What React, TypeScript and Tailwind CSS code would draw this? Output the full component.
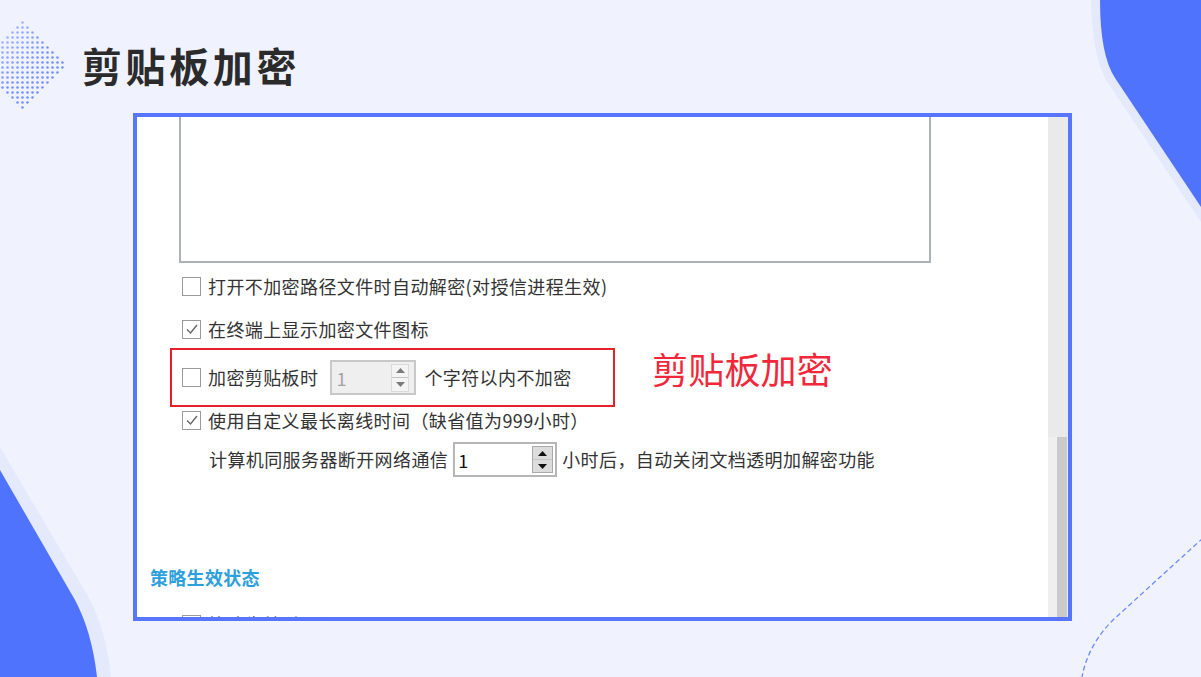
import React from 'react';

const cjk = "font-['Noto_Sans_CJK_SC','Noto_Sans',sans-serif]";

// Page decorations: corner blobs, dashed curve and the dotted diamond
function Backdrop() {
  return (
    <svg className="absolute inset-0 pointer-events-none" width="1201" height="677" viewBox="0 0 1201 677">
      <defs>
        <pattern id="dots" width="5" height="5" patternUnits="userSpaceOnUse">
          <circle cx="2.5" cy="2.5" r="1.3" fill="#6a86ff" />
        </pattern>
        <linearGradient id="fade" x1="0" y1="0" x2="1" y2="1">
          <stop offset="0" stopColor="#fff" stopOpacity="0.35" />
          <stop offset="0.55" stopColor="#fff" stopOpacity="0.9" />
          <stop offset="1" stopColor="#fff" stopOpacity="1" />
        </linearGradient>
        <mask id="diamondMask">
          <polygon points="22,20 67,65 22,110 -23,65" fill="url(#fade)" />
        </mask>
      </defs>

      <rect x="-30" y="15" width="100" height="100" fill="url(#dots)" mask="url(#diamondMask)" />

      <path d="M1091 0 Q1092 55 1106 80 L1201 222 L1201 0 Z" fill="#e5e9fc" />
      <path d="M1100 0 Q1100 55 1115 78 L1201 207 L1201 0 Z" fill="#5073fe" />

      <path d="M0 447 L89 598 Q106 630 111 677 L0 677 Z" fill="#e5e9fc" />
      <path d="M0 470 L75 600 Q92 632 97 677 L0 677 Z" fill="#5073fe" />

      <path
        d="M1203 538 L1113 620 Q1088 645 1082 677"
        fill="none"
        stroke="#6d88ff"
        strokeWidth="1.3"
        strokeDasharray="5 3"
      />
    </svg>
  );
}

function Checkbox({ checked = false }: { checked?: boolean }) {
  return (
    <div className="w-[19px] h-[19px] shrink-0 border-[1.5px] border-[#9a9a9a] bg-white flex items-center justify-center">
      {checked && (
        <svg width="14" height="14" viewBox="0 0 14 14">
          <path d="M2 7.5 L5.5 11 L12 3" fill="none" stroke="#666" strokeWidth="1.4" />
        </svg>
      )}
    </div>
  );
}

function Arrows({ disabled = false }: { disabled?: boolean }) {
  const c = disabled ? '#7b7b7b' : '#111';
  return (
    <div
      className={
        disabled
          ? 'w-[18px] h-[28px] flex flex-col border border-[#dadada] bg-[#f4f4f4]'
          : 'w-[21px] h-[27px] flex flex-col border border-[#a9a9a9] bg-[#dcdcdc]'
      }
    >
      <div className="flex-1 flex items-center justify-center border-b border-[#c4c4c4]">
        <svg width="9" height="5" viewBox="0 0 9 5">
          <polygon points="0,5 9,5 4.5,0" fill={c} />
        </svg>
      </div>
      <div className="flex-1 flex items-center justify-center">
        <svg width="9" height="5" viewBox="0 0 9 5">
          <polygon points="0,0 9,0 4.5,5" fill={c} />
        </svg>
      </div>
    </div>
  );
}

function Row({ checked, label, className = '' }: { checked?: boolean; label: string; className?: string }) {
  return (
    <div className={`h-[20px] pl-[45px] flex items-center ${className}`}>
      <Checkbox checked={checked} />
      <span className="ml-[7px] text-[18px] tracking-[0.4px] leading-[20px] text-[#333] whitespace-nowrap">{label}</span>
    </div>
  );
}

export default function App() {
  return (
    <div className={`relative w-[1201px] h-[677px] overflow-hidden bg-[#f0f3fe] ${cjk}`}>
      <Backdrop />

      <div className="relative pt-[45px]">
        <h1 className="ml-[82px] text-[40px] leading-none font-bold tracking-[3.6px] text-[#2b2b2b]">剪贴板加密</h1>

        <div className="ml-[133px] mt-[28px] w-[939px] h-[508px] border-4 border-[#5876fd] flex overflow-hidden">
          <div className="flex-1 bg-white flex flex-col">
            <div className="ml-[42px] w-[752px] h-[146px] shrink-0 border-2 border-t-0 border-[#aeb1b5] bg-white" />

            <Row className="mt-[13px]" label="打开不加密路径文件时自动解密(对授信进程生效)" />
            <Row className="mt-[23px]" checked label="在终端上显示加密文件图标" />

            <div className="mt-[9px] flex items-start">
              <div className="ml-[33px] w-[445px] h-[59px] border-2 border-[#e3222b] pl-[10px] flex items-center">
                <Checkbox />
                <span className="ml-[7px] text-[18px] tracking-[0.4px] text-[#333] whitespace-nowrap">加密剪贴板时</span>
                <div className="ml-[12px] w-[86px] h-[35px] border-2 border-[#c8c8c8] bg-[#efefef] flex items-center justify-between pl-[4px] pr-[5px]">
                  <span className="text-[18px] text-[#a3a3a3] leading-none">1</span>
                  <Arrows disabled />
                </div>
                <span className="ml-[8px] text-[18px] tracking-[0.4px] text-[#333] whitespace-nowrap">个字符以内不加密</span>
              </div>
              <span className="ml-[37px] mt-[2px] text-[36px] leading-none tracking-[0.2px] text-[#f2283a] whitespace-nowrap">剪贴板加密</span>
            </div>

            <Row className="mt-[3px]" checked label="使用自定义最长离线时间（缺省值为999小时）" />

            <div className="mt-[12px] h-[35px] pl-[72px] flex items-center">
              <span className="text-[18px] tracking-[0.4px] text-[#333] whitespace-nowrap">计算机同服务器断开网络通信</span>
              <div className="ml-[5px] w-[104px] h-[35px] border-2 border-[#b5b5b5] bg-white flex items-center justify-between pl-[3px] pr-[2px]">
                <span className="text-[18px] text-[#111] leading-none">1</span>
                <Arrows />
              </div>
              <span className="ml-[5px] text-[18px] tracking-[0.4px] text-[#333] whitespace-nowrap">小时后，自动关闭文档透明加解密功能</span>
            </div>

            <div className="mt-[90px] pl-[13px] h-[20px] text-[18px] leading-[20px] font-bold text-[#2d9fdb] tracking-[0.3px]">策略生效状态</div>

            {/* next option, scrolled past the bottom of the panel */}
            <Row className="mt-[27px] shrink-0" label="策略生效时间设置" />
          </div>

          {/* scrollbar */}
          <div className="w-[20px] flex flex-col">
            <div className="h-[320px] bg-[#eaeaea]" />
            <div className="flex-1 flex">
              <div className="w-[9px] bg-[#efefef]" />
              <div className="w-[10px] bg-[#cacaca]" />
              <div className="w-[1px] bg-[#eaeaea]" />
            </div>
          </div>
        </div>
      </div>
    </div>
  );
}
